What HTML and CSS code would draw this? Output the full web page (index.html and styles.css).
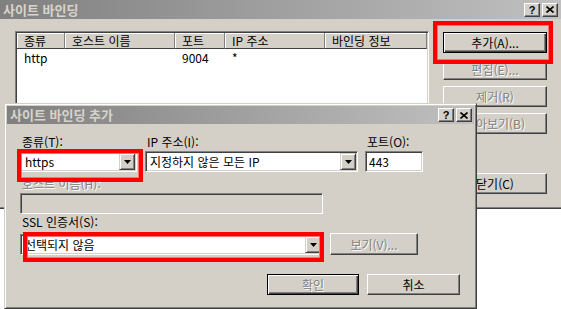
FILE: index.html
```html
<!DOCTYPE html>
<html lang="ko">

<head>
  <meta charset="UTF-8">
  <title>사이트 바인딩</title>
  <link rel="stylesheet" href="styles.css">
</head>

<body>
  <!-- parent window -->
  <div class="window main-window">
    <div class="caption">
      <span class="caption-title">사이트 바인딩</span>
      <div class="caption-buttons">
        <span class="cap-btn help">?</span>
        <span class="cap-btn">
          <svg width="8" height="7" viewBox="0 0 8 7"><path d="M0.5 0.5L7.5 6.5M7.5 0.5L0.5 6.5" stroke="#000" stroke-width="1.6"/></svg>
        </span>
      </div>
    </div>
    <div class="main-body">
      <div class="listview">
        <div class="lv-header">
          <div class="lv-col">종류</div>
          <div class="lv-col">호스트 이름</div>
          <div class="lv-col">포트</div>
          <div class="lv-col">IP 주소</div>
          <div class="lv-col">바인딩 정보</div>
        </div>
        <div class="lv-row">
          <div class="lv-cell">http</div>
          <div class="lv-cell"></div>
          <div class="lv-cell">9004</div>
          <div class="lv-cell">*</div>
          <div class="lv-cell"></div>
        </div>
      </div>
      <div class="side-buttons">
        <button class="btn default">추가(A)...</button>
        <button class="btn" disabled>편집(E)...</button>
        <button class="btn" disabled>제거(R)</button>
        <button class="btn" disabled>찾아보기(B)</button>
        <button class="btn close-btn">닫기(C)</button>
      </div>
    </div>
  </div>

  <!-- child dialog -->
  <div class="window dialog">
    <div class="caption small">
      <span class="caption-title">사이트 바인딩 추가</span>
      <div class="caption-buttons">
        <span class="cap-btn help">?</span>
        <span class="cap-btn">
          <svg width="8" height="7" viewBox="0 0 8 7"><path d="M0.5 0.5L7.5 6.5M7.5 0.5L0.5 6.5" stroke="#000" stroke-width="1.6"/></svg>
        </span>
      </div>
    </div>
    <div class="dialog-body">
      <div class="field-row">
        <div class="field field-type">
          <label class="label">종류(T):</label>
          <div class="combo">
            <span class="combo-text">https</span>
            <span class="combo-arrow"><svg width="7" height="4" viewBox="0 0 7 4"><path d="M0 0H7L3.5 4Z"/></svg></span>
          </div>
        </div>
        <div class="field field-ip">
          <label class="label">IP 주소(I):</label>
          <div class="combo">
            <span class="combo-text">지정하지 않은 모든 IP</span>
            <span class="combo-arrow"><svg width="7" height="4" viewBox="0 0 7 4"><path d="M0 0H7L3.5 4Z"/></svg></span>
          </div>
        </div>
        <div class="field field-port">
          <label class="label">포트(O):</label>
          <div class="textbox">443</div>
        </div>
      </div>

      <label class="label disabled host-label">호스트 이름(H):</label>
      <div class="textbox wide readonly"></div>

      <label class="label ssl-label">SSL 인증서(S):</label>
      <div class="ssl-row">
        <div class="combo wide">
          <span class="combo-text">선택되지 않음</span>
          <span class="combo-arrow"><svg width="7" height="4" viewBox="0 0 7 4"><path d="M0 0H7L3.5 4Z"/></svg></span>
        </div>
        <button class="btn view-btn" disabled>보기(V)...</button>
      </div>

      <div class="dialog-buttons">
        <button class="btn default ok-btn" disabled>확인</button>
        <button class="btn cancel-btn">취소</button>
      </div>
    </div>
  </div>

  <!-- red annotation boxes -->
  <div class="mark mark-add"></div>
  <div class="mark mark-type"></div>
  <div class="mark mark-ssl"></div>
</body>

</html>
```

FILE: styles.css
```css
* {
  margin: 0;
  padding: 0;
  box-sizing: border-box;
}

body {
  width: 561px;
  height: 309px;
  overflow: hidden;
  position: relative;
  background: #fff;
  font-family: 'Noto Sans CJK KR', 'Liberation Sans', sans-serif;
  font-size: 12px;
  color: #000;
}

.window {
  background-color: #d4d0c8;
}

.main-window {
  width: 564px;
  height: 209px;
  border-bottom: 1px solid #404040;
  box-shadow: inset 0 -1px #808080;
}

.caption {
  height: 19px;
  display: flex;
  align-items: center;
  justify-content: space-between;
  padding: 0 6px 0 3px;
  background: linear-gradient(to right, #808080, #c0c0c0);
}

.caption.small {
  height: 18px;
  padding: 0 2px 0 3px;
}

.caption-title {
  color: #d8d4cc;
  font-weight: bold;
  font-size: 13px;
  line-height: 18px;
}

.caption-buttons {
  display: flex;
  gap: 2px;
}

.cap-btn {
  width: 16px;
  height: 14px;
  display: flex;
  align-items: center;
  justify-content: center;
  background-color: #d4d0c8;
  border: 1px solid;
  border-color: #fff #404040 #404040 #fff;
  box-shadow: inset -1px -1px #808080;
  font-family: 'Liberation Sans', sans-serif;
  font-weight: bold;
  font-size: 11px;
  line-height: 12px;
}

.main-body {
  display: flex;
  padding: 12px 0 0 15px;
}

.listview {
  width: 414px;
  height: 172px;
  padding: 1px;
  background: #fff;
  border: 1px solid;
  border-color: #808080 #fff #fff #808080;
  box-shadow: inset 1px 1px #404040, inset -1px -1px #d4d0c8;
}

.lv-header,
.lv-row {
  display: grid;
  grid-template-columns: 48px 110px 50px 100px 1fr;
}

.lv-col {
  height: 16px;
  line-height: 15px;
  padding-left: 7px;
  background-color: #d4d0c8;
  border-right: 1px solid #808080;
  border-bottom: 1px solid #404040;
  box-shadow: inset 1px 1px #fff;
}

.lv-cell {
  height: 17px;
  line-height: 17px;
  padding-left: 7px;
}

.side-buttons {
  display: flex;
  flex-direction: column;
  gap: 6px;
  margin: 1px 0 0 14px;
}

.btn {
  width: 104px;
  height: 21px;
  background-color: #d4d0c8;
  border: 1px solid;
  border-color: #fff #404040 #404040 #fff;
  box-shadow: inset -1px -1px #808080;
  font-family: inherit;
  font-size: 12px;
  color: #000;
  line-height: 17px;
}

.btn.default {
  border: 1px solid #000;
  box-shadow: inset 1px 1px #fff, inset -1px -1px #404040, inset -2px -2px #808080;
}

.btn:disabled,
.label.disabled {
  color: #808080;
  text-shadow: 1px 1px #fff;
}

.close-btn {
  margin-top: 33px;
}

/* child dialog */

.dialog {
  position: absolute;
  left: 4px;
  top: 103px;
  width: 473px;
  height: 206px;
  padding: 2px;
  border: 1px solid;
  border-color: #d4d0c8 #404040 #404040 #d4d0c8;
  box-shadow: inset 1px 1px #fff, inset -1px -1px #808080;
}

.dialog-body {
  padding: 11px 14px 0 13px;
}

.label {
  display: block;
  height: 14px;
  line-height: 14px;
  padding-left: 2px;
  margin-bottom: 2px;
}

.field-row {
  display: flex;
}

.field-type {
  width: 117px;
}

.field-ip {
  width: 213px;
  margin-left: 8px;
}

.field-port {
  width: 58px;
  margin-left: 7px;
}

.combo,
.textbox {
  height: 21px;
  display: flex;
  align-items: center;
  background: #fff;
  border: 1px solid;
  border-color: #808080 #fff #fff #808080;
  box-shadow: inset 1px 1px #404040, inset -1px -1px #d4d0c8;
  padding: 1px;
}

.combo-text,
.textbox {
  padding-left: 3px;
  line-height: 17px;
}

.combo-arrow {
  width: 16px;
  height: 17px;
  margin-left: auto;
  display: flex;
  align-items: center;
  justify-content: center;
  background-color: #d4d0c8;
  border: 1px solid;
  border-color: #d4d0c8 #404040 #404040 #d4d0c8;
  box-shadow: inset 1px 1px #fff, inset -1px -1px #808080;
}

.host-label {
  margin-top: 5px;
}

.textbox.wide,
.combo.wide {
  width: 303px;
}

.textbox.readonly {
  background-color: #d4d0c8;
}

.ssl-label {
  margin-top: 1px;
  margin-bottom: 4px;
}

.ssl-row {
  display: flex;
  align-items: flex-start;
}

.ssl-row .combo {
  margin-top: 1px;
}

.view-btn {
  width: 88px;
  height: 22px;
  margin-left: 7px;
}

.dialog-buttons {
  display: flex;
  justify-content: flex-end;
  gap: 8px;
  margin-top: 19px;
}

.ok-btn {
  width: 92px;
}

.cancel-btn {
  width: 93px;
}

/* red highlight frames drawn over the screenshot */

.mark {
  position: absolute;
  border: 4px solid #ff0000;
  box-shadow: inset 0 0 0 1px #ff7070;
}

.mark-add {
  left: 433px;
  top: 21px;
  width: 120px;
  height: 43px;
}

.mark-type {
  left: 17px;
  top: 149px;
  width: 126px;
  height: 33px;
}

.mark-ssl {
  left: 23px;
  top: 232px;
  width: 301px;
  height: 30px;
}
```
